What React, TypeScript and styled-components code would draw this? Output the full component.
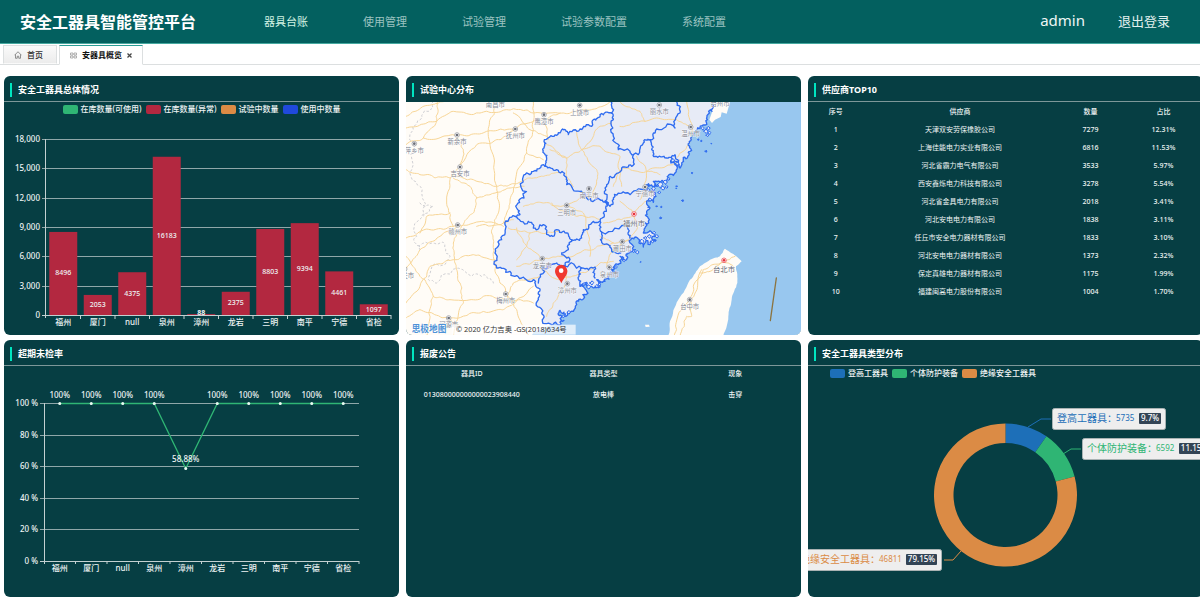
import React from 'react';
import styled, { createGlobalStyle } from 'styled-components';

const color = {
  header: '#03605f',
  panel: '#063e43',
  line: '#8fa7a9',
  axis: '#c3d0d1',
  text: '#eef4f4',
  accent: '#00e5c0',
  red: '#b32840',
  green: '#2fb574',
  orange: '#db8b45',
  blue: '#2049db',
  steel: '#1d6fb8',
};

const GlobalStyle = createGlobalStyle`
  * { box-sizing: border-box; }
  body {
    margin: 0;
    background: #fff;
    overflow-x: hidden;
    font-family: "Noto Sans", "Noto Sans CJK SC", sans-serif;
  }
  button { font-family: inherit; border: 0; padding: 0; cursor: pointer; }
  svg text { font-family: "Noto Sans", "Noto Sans CJK SC", sans-serif; }
`;

const Page = styled.div`
  overflow: hidden;
`;

const Header = styled.header`
  display: flex;
  align-items: center;
  height: 44px;
  padding: 0 30px 0 20px;
  background: ${color.header};
  border-bottom: 1px solid #45a9a0;
`;

const Brand = styled.h1`
  flex: 0 0 244px;
  margin: 0;
  color: #fff;
  font-size: 16px;
  line-height: 24px;
  font-weight: 700;
  white-space: nowrap;
`;

const Nav = styled.nav`
  display: flex;
  flex: 1;
  gap: 55px;
`;

const NavLink = styled.a<{ $active?: boolean }>`
  color: ${(p) => (p.$active ? '#d3f3e4' : '#9cc3c1')};
  font-size: 11px;
  line-height: 16px;
  text-decoration: none;
  white-space: nowrap;
`;

const Account = styled.div`
  display: flex;
  align-items: center;
  gap: 33px;
`;

const UserName = styled.span`
  color: #eef6f5;
  font-size: 15px;
  line-height: 20px;
  padding-bottom: 4px;
`;

const Logout = styled.button`
  background: none;
  color: #e3f1ef;
  font-size: 13px;
  line-height: 20px;
  padding-bottom: 2px;
`;

const TabBar = styled.div`
  display: flex;
  align-items: flex-end;
  gap: 2px;
  height: 21px;
  padding-left: 3px;
  border-bottom: 1px solid #dcdfe0;
`;

const Tab = styled.div<{ $active?: boolean }>`
  display: flex;
  align-items: center;
  height: ${(p) => (p.$active ? 20 : 19)}px;
  margin-bottom: ${(p) => (p.$active ? -1 : 0)}px;
  padding: ${(p) => (p.$active ? '0 10px' : '0 13px 0 10px')};
  gap: 5px;
  border: 1px solid #dcdfe0;
  border-top-color: ${(p) => (p.$active ? '#2a9d95' : '#dcdfe0')};
  border-bottom-color: ${(p) => (p.$active ? '#fff' : 'transparent')};
  background: ${(p) => (p.$active ? '#fff' : 'linear-gradient(#fafafa, #ececec)')};
`;

const TabLabel = styled.button<{ $active?: boolean }>`
  display: flex;
  align-items: center;
  gap: 5px;
  background: none;
  color: ${(p) => (p.$active ? '#111' : '#333')};
  font-size: 8px;
  line-height: 12px;
  font-weight: ${(p) => (p.$active ? 700 : 500)};
  white-space: nowrap;
`;

const CloseTab = styled.button`
  display: flex;
  background: none;
`;

const Dashboard = styled.main`
  display: grid;
  grid-template-columns: repeat(3, minmax(0, 1fr));
  gap: 5px 7px;
  margin: 11px -3px 0 4px;
`;

const PanelBox = styled.section`
  overflow: hidden;
  border-radius: 6px;
  background: ${color.panel};
`;

const PanelHead = styled.header<{ $plain?: boolean }>`
  display: flex;
  align-items: center;
  gap: 6px;
  height: 26px;
  padding: 3px 6px 0;
  border-bottom: 1px solid ${(p) => (p.$plain ? color.panel : '#7d9799')};
`;

const Accent = styled.span`
  width: 2px;
  height: 14px;
  background: ${color.accent};
`;

const PanelTitle = styled.h2`
  margin: 0;
  color: #fff;
  font-size: 9px;
  line-height: 14px;
  font-weight: 700;
`;

const Legend = styled.ul<{ $start?: boolean }>`
  display: flex;
  justify-content: ${(p) => (p.$start ? 'flex-start' : 'center')};
  gap: 4px;
  height: 14px;
  margin: 0;
  padding: ${(p) => (p.$start ? '0 0 0 22px' : '0')};
  list-style: none;
`;

const LegendItem = styled.li`
  display: flex;
  align-items: center;
  gap: 3px;
  color: #eef3f3;
  font-size: 8px;
  line-height: 12px;
  font-weight: 500;
  white-space: nowrap;
`;

const Swatch = styled.span<{ $fill: string }>`
  width: 15px;
  height: 9px;
  border-radius: 2px;
  background: ${(p) => p.$fill};
`;

const Drawing = styled.svg`
  display: block;
  width: 100%;
  height: auto;
`;

const DataTable = styled.table<{ $row: number; $bold?: boolean }>`
  width: 100%;
  table-layout: fixed;
  border-collapse: collapse;
  color: ${color.text};
  font-size: 7px;
  line-height: 12px;
  text-align: center;

  th { height: ${(p) => (p.$bold ? 15 : 19)}px; padding: 0; font-weight: 500; }
  td { height: ${(p) => p.$row}px; padding: 0; font-weight: ${(p) => (p.$bold ? 500 : 400)}; }
  td:not(:nth-child(2)) { font-weight: 500; }
`;

const Col = styled.col<{ $w: string }>`
  width: ${(p) => p.$w};
`;

function Panel({ title, plain, children }: { title: string; plain?: boolean; children: React.ReactNode }) {
  return (
    <PanelBox>
      <PanelHead $plain={plain}>
        <Accent />
        <PanelTitle>{title}</PanelTitle>
      </PanelHead>
      {children}
    </PanelBox>
  );
}

function ChartLegend({ items, start }: { items: [string, string][]; start?: boolean }) {
  return (
    <Legend $start={start}>
      {items.map(([label, fill]) => (
        <LegendItem key={label}>
          <Swatch $fill={fill} />
          {label}
        </LegendItem>
      ))}
    </Legend>
  );
}

const cities = ['福州', '厦门', 'null', '泉州', '漳州', '龙岩', '三明', '南平', '宁德', '省检'];

/* ---------- bar chart ---------- */

const stock = [8496, 2053, 4375, 16183, 88, 2375, 8803, 9394, 4461, 1097];

function StockChart() {
  const left = 42;
  const right = 387;
  const base = 199;
  const height = 176;
  const step = (right - left) / stock.length;
  return (
    <Drawing viewBox="0 0 395 219" fontSize="8" fill={color.text} role="img" aria-label="安全工器具总体情况">
      {[0, 1, 2, 3, 4, 5, 6].map((i) => {
        const y = Math.round(base - (height * i) / 6) + 0.5;
        return (
          <g key={i}>
            <line x1={left - 4} x2={right} y1={y} y2={y} stroke={i ? color.line : color.axis} />
            <text x={left - 6} y={y + 2} textAnchor="end" fontWeight="500">
              {(i * 3000).toLocaleString('en-US')}
            </text>
          </g>
        );
      })}
      <line x1={left - 0.5} x2={left - 0.5} y1={base - height} y2={base + 3} stroke={color.axis} />
      {stock.map((value, i) => {
        const h = (value / 18000) * height;
        const mid = left + step * (i + 0.5);
        return (
          <g key={i} textAnchor="middle">
            <rect x={mid - 14} y={base - h} width="28" height={h} fill={color.red} />
            <text x={mid} y={Math.min(base - h / 2 + 2, base)} fontSize="7" fontWeight={value < 100 ? 700 : 500}>
              {value}
            </text>
            <text x={mid} y={base + 10} fontWeight="500">{cities[i]}</text>
            <line x1={mid + step / 2} x2={mid + step / 2} y1={base} y2={base + 4} stroke={color.axis} />
          </g>
        );
      })}
    </Drawing>
  );
}

/* ---------- line chart ---------- */

const rates = [100, 100, 100, 100, 58.88, 100, 100, 100, 100, 100];

function OverdueChart() {
  const left = 40;
  const right = 355;
  const base = 195;
  const height = 158;
  const step = (right - left) / rates.length;
  const pts = rates.map((r, i) => [left + step * (i + 0.5), base - (r / 100) * height + 0.5]);
  return (
    <Drawing viewBox="0 0 395 231" fontSize="8" fill={color.text} role="img" aria-label="超期未检率">
      {[0, 1, 2, 3, 4, 5].map((i) => {
        const y = Math.round(base - (height * i) / 5) + 0.5;
        return (
          <g key={i}>
            <line x1={left - 4} x2={right} y1={y} y2={y} stroke={i ? color.line : color.axis} />
            <text x={left - 6} y={y + 2} textAnchor="end" fontWeight="500">{i * 20} %</text>
          </g>
        );
      })}
      <line x1={left + 0.5} x2={left + 0.5} y1={base - height} y2={base + 3} stroke={color.axis} />
      <polyline points={pts.map((p) => p.join(',')).join(' ')} fill="none" stroke={color.green} strokeWidth="1.3" />
      {pts.map(([x, y], i) => (
        <g key={i} textAnchor="middle">
          <circle cx={x} cy={y} r="1.5" fill="#e9fbf2" />
          <text x={x} y={y - 6} fontWeight="500">{rates[i]}%</text>
          <text x={x} y={base + 10} fontWeight="500">{cities[i]}</text>
          <line x1={x + step / 2} x2={x + step / 2} y1={base} y2={base + 3} stroke={color.axis} />
        </g>
      ))}
    </Drawing>
  );
}

/* ---------- ring chart ---------- */

function arc(from: number, to: number, outer: number, inner: number) {
  const cx = 197.5;
  const cy = 115;
  const at = (share: number, r: number) => {
    const a = share * Math.PI * 2;
    return `${cx + r * Math.sin(a)} ${cy - r * Math.cos(a)}`;
  };
  const large = to - from > 0.5 ? 1 : 0;
  return `M${at(from, outer)}A${outer} ${outer} 0 ${large} 1 ${at(to, outer)}L${at(to, inner)}A${inner} ${inner} 0 ${large} 0 ${at(from, inner)}Z`;
}

const kinds = [
  { name: '登高工器具', count: 5735, pct: '9.7%', fill: color.steel, from: 0, to: 0.097, lead: '220,47 233,39 243,39', x: 244, y: 28, w: 114, num: 64, tag: 87, tagW: 22 },
  { name: '个体防护装备', count: 6592, pct: '11.15%', fill: color.green, from: 0.097, to: 0.2085, lead: '255,74 263,69 273,69', x: 274, y: 58, w: 130, num: 74, tag: 97, tagW: 31 },
  { name: '绝缘安全工器具', count: 46811, pct: '79.15%', fill: color.orange, from: 0.2085, to: 1, lead: '153,171 145,180 136,180', x: -13, y: 169, w: 147, num: 84, tag: 111, tagW: 31 },
];

function KindChart() {
  return (
    <Drawing viewBox="0 0 395 217" role="img" aria-label="安全工器具类型分布">
      {kinds.map((k) => (
        <g key={k.name}>
          <path d={arc(k.from, k.to, 71.5, 52)} fill={k.fill} />
          <polyline points={k.lead} fill="none" stroke={k.fill} strokeWidth="1" />
          <g transform={`translate(${k.x} ${k.y})`}>
            <rect x="0.5" y="0.5" width={k.w - 1} height="21" rx="2" fill="#eeeeee" stroke="#a9b2b3" />
            <text x="5" y="14" fontSize="10" fill={k.fill}>{k.name}：</text>
            <text x={k.num} y="13" fontSize="8" fill={k.fill}>{k.count}</text>
            <rect x={k.tag} y="5" width={k.tagW} height="11" rx="1" fill="#334455" />
            <text x={k.tag + k.tagW / 2} y="13" fontSize="8" fontWeight="500" fill="#fff" textAnchor="middle">{k.pct}</text>
          </g>
        </g>
      ))}
    </Drawing>
  );
}

/* ---------- map ---------- */

type Pt = [number, number];

const noise = (a: Pt, b: Pt) => {
  const n = Math.sin(a[0] * 12.9898 + a[1] * 78.233 + b[0] * 12.9898 + b[1] * 78.233) * 43758.5453;
  return (n - Math.floor(n)) * 2 - 1;
};

/* Splits each edge repeatedly and pushes the middle aside, so that borders look surveyed. */
function jag(points: Pt[], amp = 0.34): Pt[] {
  let list = points;
  for (let pass = 0; pass < 3; pass++) {
    const next: Pt[] = [list[0]];
    for (let i = 1; i < list.length; i++) {
      const a = list[i - 1];
      const b = list[i];
      const dx = b[0] - a[0];
      const dy = b[1] - a[1];
      if (Math.hypot(dx, dy) > 6) {
        const k = noise(a, b) * amp * (pass === 0 ? 0.6 : 1.1) * (a[0] + a[1] * 3 < b[0] + b[1] * 3 ? 1 : -1);
        next.push([(a[0] + b[0]) / 2 - dy * k, (a[1] + b[1]) / 2 + dx * k]);
      }
      next.push(b);
    }
    list = next;
  }
  return list;
}

const poly = (pts: Pt[]) => 'M' + pts.map((p) => `${p[0].toFixed(1)} ${p[1].toFixed(1)}`).join('L');

function smooth(p: Pt[]) {
  let d = `M${p[0][0]} ${p[0][1]}`;
  for (let i = 0; i < p.length - 1; i++) {
    const a = p[i - 1] || p[i];
    const b = p[i];
    const c = p[i + 1];
    const e = p[i + 2] || c;
    d += `C${b[0] + (c[0] - a[0]) / 6} ${b[1] + (c[1] - a[1]) / 6} ${c[0] - (e[0] - b[0]) / 6} ${c[1] - (e[1] - b[1]) / 6} ${c[0]} ${c[1]}`;
  }
  return d;
}

const coast: Pt[] = jag([
  [935, 104], [936, 125], [922, 150], [900, 175], [885, 190], [868, 215], [870, 245], [862, 265], [845, 280], [840, 295],
  [828, 275], [815, 265], [813, 280], [832, 293], [825, 310], [805, 325], [790, 335], [760, 335], [772, 350], [745, 342],
  [735, 365], [750, 362], [768, 380], [760, 398], [740, 398], [750, 415], [740, 430], [748, 450], [735, 475], [730, 490],
  [750, 483], [765, 495], [755, 505], [768, 512], [750, 525], [738, 512], [730, 532], [718, 515], [708, 502], [693, 510],
  [706, 540], [685, 550], [680, 570], [660, 560], [655, 585], [635, 598], [650, 608], [630, 615], [615, 635], [600, 640],
  [590, 630], [600, 652], [575, 650], [560, 638], [540, 650], [560, 665], [548, 690], [530, 705], [520, 725], [495, 740],
  [480, 722], [475, 735], [492, 752], [470, 762], [455, 765],
], 0.46);

const inland: Pt[] = jag([
  [455, 765], [435, 762], [425, 730], [415, 690], [415, 655], [400, 630], [365, 625], [330, 605], [290, 595], [285, 550],
  [305, 510], [315, 465], [345, 440], [360, 435], [350, 415], [372, 385], [370, 320], [400, 305], [435, 290], [440, 265],
  [428, 240], [432, 215], [462, 200], [488, 178], [505, 195], [540, 178], [575, 170], [580, 150], [600, 135], [635, 130], [635, 90],
]);

const borders: Pt[][] = [
  [[435, 290], [470, 300], [495, 320], [500, 345], [540, 365], [560, 385], [600, 390], [625, 400], [615, 395]],
  [[635, 130], [640, 150], [640, 200], [655, 240], [690, 245], [700, 255], [730, 220], [750, 210], [765, 190], [770, 178], [825, 175], [840, 130], [830, 96]],
  [[750, 210], [755, 240], [765, 260], [800, 265], [825, 255], [838, 285]],
  [[700, 255], [695, 290], [665, 295], [630, 320], [620, 350], [615, 395], [630, 410], [640, 385], [675, 370], [730, 360], [745, 345]],
  [[625, 400], [610, 430], [600, 455], [575, 460], [550, 480], [545, 505], [515, 510]],
  [[345, 440], [385, 455], [400, 475], [430, 465], [450, 500], [470, 480], [500, 490], [515, 510], [505, 540], [485, 550], [510, 570], [495, 590], [470, 580], [430, 590], [415, 640]],
  [[495, 590], [545, 595], [537, 620], [542, 650]],
  [[545, 595], [585, 592], [585, 625]],
  [[600, 455], [600, 480], [605, 487], [685, 480], [690, 505]],
  [[605, 487], [605, 518], [625, 525], [635, 545], [662, 550]],
];

const roads: Pt[][] = [
  [[18, 140], [100, 104], [130, 96]],
  [[18, 175], [110, 155], [160, 125], [240, 130], [320, 120], [400, 130], [490, 130], [560, 120], [630, 96]],
  [[18, 225], [70, 205], [170, 198], [260, 185], [345, 178], [430, 150], [480, 130]],
  [[70, 205], [110, 155], [112, 96]],
  [[170, 200], [190, 240], [180, 290], [150, 330], [140, 400], [160, 470]],
  [[18, 300], [60, 315], [150, 325], [220, 330], [290, 350], [330, 345], [390, 325], [430, 320], [480, 310]],
  [[160, 325], [210, 350], [230, 385], [220, 430], [185, 470], [160, 520], [165, 580], [180, 640], [190, 700], [160, 800]],
  [[285, 110], [265, 200], [290, 350], [290, 440], [275, 490], [280, 560], [300, 640], [350, 720], [390, 800]],
  [[345, 178], [300, 210], [230, 225], [180, 290]],
  [[400, 96], [400, 180], [380, 250], [350, 310], [330, 400], [310, 460]],
  [[380, 250], [430, 270]],
  [[430, 150], [445, 210]],
  [[340, 130], [390, 180], [440, 200]],
  [[230, 385], [270, 375], [330, 355], [372, 350]],
  [[230, 470], [300, 465], [340, 450]],
  [[18, 505], [90, 480], [170, 467], [250, 455], [310, 470]],
  [[60, 490], [80, 440], [150, 430]],
  [[18, 600], [60, 540], [120, 500], [170, 470]],
  [[18, 560], [60, 620], [100, 680], [150, 690], [250, 680], [320, 690], [400, 700]],
  [[80, 800], [90, 740], [100, 680]],
  [[18, 700], [60, 650], [90, 590], [160, 570], [220, 555], [285, 570]],
  [[320, 690], [340, 640], [420, 620]],
  [[150, 745], [230, 730], [310, 720], [400, 650]],
  [[18, 745], [60, 720], [150, 745], [210, 790]],
  [[450, 240], [500, 265], [545, 240], [600, 230], [660, 260], [665, 350]],
  [[440, 225], [500, 265], [500, 320], [520, 350]],
  [[545, 240], [590, 300], [590, 340], [570, 390]],
  [[530, 185], [545, 240], [600, 170], [635, 160]],
  [[370, 410], [430, 400], [500, 410], [560, 380]],
  [[455, 400], [530, 440], [600, 450]],
  [[500, 410], [550, 430], [560, 480], [570, 560]],
  [[325, 475], [390, 490], [480, 485]],
  [[350, 475], [380, 530], [350, 570]],
  [[390, 490], [380, 530], [425, 570], [350, 590]],
  [[425, 570], [480, 560], [580, 540], [640, 520]],
  [[440, 740], [470, 690], [500, 640], [500, 600]],
  [[425, 600], [480, 630], [540, 610], [600, 580], [640, 575]],
  [[600, 500], [640, 520], [666, 516], [690, 510]],
  [[660, 96], [720, 125], [735, 155], [830, 150], [872, 171]],
  [[735, 155], [660, 170]],
  [[860, 96], [878, 171], [870, 215], [830, 265]],
  [[840, 270], [740, 305], [710, 260]],
  [[740, 305], [665, 295], [640, 350]],
  [[740, 305], [735, 350], [720, 390]],
  [[740, 305], [780, 315]],
  [[610, 460], [650, 450], [703, 433], [730, 400], [750, 390]],
  [[660, 395], [703, 433], [710, 480], [685, 510], [640, 540], [620, 590]],
];

const taiwanRoads: Pt[][] = [
  [[1005, 560], [970, 575], [910, 600], [880, 650], [845, 720], [822, 800]],
  [[970, 575], [930, 605], [900, 610]],
  [[905, 600], [872, 690], [875, 740], [860, 740], [840, 800]],
  [[970, 575], [1000, 590]],
];

const provinceLines: Pt[][] = [
  [[100, 96], [70, 130], [40, 180], [35, 300], [65, 370], [50, 500], [60, 540], [120, 520], [150, 560], [85, 625], [110, 640], [200, 610], [260, 620], [280, 640]],
  [[60, 400], [100, 410], [60, 440]],
];

const taiwan: Pt[] = jag([
  [975, 537], [990, 548], [1025, 575], [1008, 590], [1012, 640], [995, 690], [985, 740], [968, 810], [805, 810],
  [810, 755], [835, 690], [870, 630], [900, 590], [930, 570], [960, 560], [975, 537],
], 0.07);

const northCoast: Pt[] = [[935, 104], [937, 125], [928, 150], [936, 160], [945, 150], [962, 142], [965, 128], [980, 132], [985, 115], [990, 96]];

const islets: [number, number, number][] = [
  [908, 176, 5], [918, 184, 7], [925, 175, 5], [928, 190, 5], [922, 197, 4], [895, 210, 2], [904, 214, 2], [918, 245, 3],
  [934, 222, 1], [876, 310, 2], [830, 350, 2], [829, 356, 1], [848, 393, 3], [784, 412, 2], [782, 445, 3], [770, 410, 2],
  [796, 338, 7], [780, 345, 8], [788, 355, 6], [800, 352, 4], [806, 328, 4], [778, 368, 4], [760, 358, 6], [750, 390, 5],
  [763, 378, 4], [762, 490, 5], [770, 500, 5], [748, 500, 6], [736, 505, 5], [726, 515, 6], [757, 516, 4], [700, 545, 4],
  [712, 548, 5], [722, 577, 1], [672, 572, 4], [648, 592, 4], [575, 640, 6], [590, 650, 5], [566, 652, 6], [598, 645, 4],
  [552, 643, 4], [507, 728, 5], [490, 740, 4], [818, 272, 6], [832, 282, 5], [740, 352, 5], [745, 362, 5],
];

const places: [string, number, number, boolean?][] = [
  ['南昌市', 286, 84], ['上饶市', 539, 107], ['鹰潭市', 432, 135], ['抚州市', 346, 178], ['新余市', 171, 196],
  ['萍乡市', 43, 222], ['吉安市', 180, 292], ['赣州市', 173, 466], ['梅州市', 317, 673], ['河源市', 146, 745],
  ['韶关市', 14, 598], ['南平市', 567, 357], ['三明市', 500, 407], ['龙岩市', 427, 567], ['漳州市', 502, 642],
  ['泉州市', 628, 593], ['丽水市', 778, 106], ['温州市', 872, 172], ['台州市', 960, 80], ['宁德市', 735, 352],
  ['莆田市', 667, 516], ['台中市', 869, 690], ['福州市', 702, 433, true], ['台北市', 972, 572, true],
];

function CenterMap() {
  const sea = [...northCoast.slice().reverse(), ...coast, [400, 788], [390, 810], [1210, 810], [1210, 90]] as Pt[];
  const region = [...coast, ...inland, [930, 90]] as Pt[];
  return (
    <Drawing viewBox="18 97 1185 699" role="img" aria-label="试验中心分布">
      <rect x="18" y="90" width="1190" height="715" fill="#fffcf7" />
      <path d={poly(sea) + 'Z'} fill="#98c7ef" />
      <path d={poly(region) + 'Z'} fill="#e7ebf6" />
      <path d={poly(taiwan) + 'Z'} fill="#fffcf7" />
      <g fill="none" strokeLinecap="round" strokeLinejoin="round">
        {provinceLines.map((p, i) => (
          <path key={i} d={poly(jag(p))} stroke="#cfcfd3" strokeWidth="3" strokeDasharray="5 8" />
        ))}
        {[...roads, ...taiwanRoads].map((p, i) => (
          <path key={i} d={smooth(jag(p, 0.12))} stroke="#f7d596" strokeWidth="3" />
        ))}
        {borders.map((p, i) => (
          <path key={i} d={poly(jag(p))} stroke="#2f6cf0" strokeWidth="4" />
        ))}
        <path d={poly(inland)} stroke="#2f6cf0" strokeWidth="4" />
        <path d={poly(coast)} stroke="#2f6cf0" strokeWidth="4" />
        {islets.map(([x, y, r], i) => (
          <path
            key={i}
            d={poly(jag([[x - r, y], [x, y - r], [x + r, y - 1], [x + 1, y + r], [x - r, y]], 0.4))}
            fill={r > 3 ? '#e7ebf6' : '#2f6cf0'}
            stroke="#2f6cf0"
            strokeWidth="3"
          />
        ))}
        <path d="M1129 625L1111 753" stroke="#8c7440" strokeWidth="4" />
      </g>
      <path d="M735 765l12 0l2 6l-12 1z" fill="#fffcf7" />
      {places.map(([name, x, y, capital]) => (
        <g key={name}>
          <circle cx={x} cy={y} r="7" fill="#fff" stroke={capital ? '#e8333c' : '#8a8d96'} strokeWidth="2" />
          <circle cx={x} cy={y} r="4" fill={capital ? '#e8333c' : '#6b6e78'} />
          <text
            x={x}
            y={y + (capital ? 36 : 28)}
            fontSize={capital ? 22 : 19}
            fill={capital ? '#666a75' : '#848894'}
            stroke="#fff"
            strokeWidth="2"
            paintOrder="stroke"
            textAnchor="middle"
          >
            {name}
          </text>
        </g>
      ))}
      <path d="M484 641C478 626 465 618 465 604A18.500 18.500 0 0 1 502 604C502 618 490 626 484 641Z" fill="#f0392f" />
      <circle cx="483.500" cy="603" r="7" fill="#fff" />
      <rect x="155" y="765" width="372" height="30" fill="#fff" fillOpacity="0.7" />
      <text x="35" y="788" fontSize="26" fontWeight="700" fill="#4f92d6" stroke="#fff" strokeWidth="3" paintOrder="stroke">思极地图</text>
      <text x="168" y="786" fontSize="22" fill="#333">© 2020 亿力吉奥 -GS(2018)634号</text>
    </Drawing>
  );
}

/* ---------- tables ---------- */

const suppliers: [string, number, string][] = [
  ['天津双安劳保橡胶公司', 7279, '12.31%'],
  ['上海佳能电力实业有限公司', 6816, '11.53%'],
  ['河北省霸力电气有限公司', 3533, '5.97%'],
  ['西安鑫烁电力科技有限公司', 3278, '5.54%'],
  ['河北省金具电力有限公司', 2018, '3.41%'],
  ['河北安电电力有限公司', 1838, '3.11%'],
  ['任丘市安全电力器材有限公司', 1833, '3.10%'],
  ['河北安电电力器材有限公司', 1373, '2.32%'],
  ['保定真雄电力器材有限公司', 1175, '1.99%'],
  ['福建闽高电力股份有限公司', 1004, '1.70%'],
];

function SupplierTable() {
  return (
    <DataTable $row={18}>
      <colgroup>
        <Col $w="14%" />
        <Col $w="49%" />
        <Col $w="17%" />
        <Col $w="20%" />
      </colgroup>
      <thead>
        <tr><th>序号</th><th>供应商</th><th>数量</th><th>占比</th></tr>
      </thead>
      <tbody>
        {suppliers.map(([name, count, share], i) => (
          <tr key={name}>
            <td>{i + 1}</td>
            <td>{name}</td>
            <td>{count}</td>
            <td>{share}</td>
          </tr>
        ))}
      </tbody>
    </DataTable>
  );
}

function ScrapTable() {
  return (
    <DataTable $row={28} $bold>
      <thead>
        <tr><th>器具ID</th><th>器具类型</th><th>现象</th></tr>
      </thead>
      <tbody>
        <tr><td>013080000000000023908440</td><td>放电棒</td><td>击穿</td></tr>
      </tbody>
    </DataTable>
  );
}

/* ---------- page ---------- */

const menu = ['器具台账', '使用管理', '试验管理', '试验参数配置', '系统配置'];

export default function App() {
  return (
    <Page>
      <GlobalStyle />
      <Header>
        <Brand>安全工器具智能管控平台</Brand>
        <Nav>
          {menu.map((item, i) => (
            <NavLink key={item} href="#" $active={i === 0}>{item}</NavLink>
          ))}
        </Nav>
        <Account>
          <UserName>admin</UserName>
          <Logout>退出登录</Logout>
        </Account>
      </Header>
      <TabBar>
        <Tab>
          <TabLabel>
            <svg width="8" height="8" viewBox="0 0 16 16" fill="none" stroke="#777" strokeWidth="1.6">
              <path d="M1 8.500L8 1.500L15 8.500M3 7V14.500H6.500V10.500H9.500V14.500H13V7" />
            </svg>
            首页
          </TabLabel>
        </Tab>
        <Tab $active>
          <TabLabel $active>
            <svg width="7" height="7" viewBox="0 0 14 14" fill="none" stroke="#999" strokeWidth="1.5">
              <path d="M1 2H6V6H1ZM8 2H13V6H8ZM1 8H6V12H1ZM8 8H13V12H8Z" />
            </svg>
            安器具概览
          </TabLabel>
          <CloseTab aria-label="关闭">
            <svg width="5" height="5" viewBox="0 0 10 10" stroke="#444" strokeWidth="2.5">
              <path d="M1 1L9 9M9 1L1 9" />
            </svg>
          </CloseTab>
        </Tab>
      </TabBar>
      <Dashboard>
        <Panel title="安全工器具总体情况">
          <ChartLegend
            items={[
              ['在库数量(可使用)', color.green],
              ['在库数量(异常)', color.red],
              ['试验中数量', color.orange],
              ['使用中数量', color.blue],
            ]}
          />
          <StockChart />
        </Panel>
        <Panel title="试验中心分布" plain>
          <CenterMap />
        </Panel>
        <Panel title="供应商TOP10">
          <SupplierTable />
        </Panel>
        <Panel title="超期未检率">
          <OverdueChart />
        </Panel>
        <Panel title="报废公告">
          <ScrapTable />
        </Panel>
        <Panel title="安全工器具类型分布">
          <ChartLegend
            start
            items={[
              ['登高工器具', color.steel],
              ['个体防护装备', color.green],
              ['绝缘安全工器具', color.orange],
            ]}
          />
          <KindChart />
        </Panel>
      </Dashboard>
    </Page>
  );
}
